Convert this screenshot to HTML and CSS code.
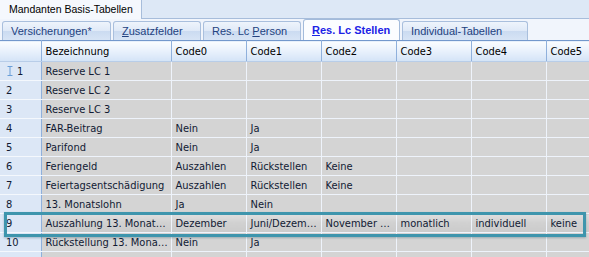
FILE: index.html
```html
<!DOCTYPE html>
<html>
<head>
<meta charset="utf-8">
<link rel="stylesheet" href="styles.css">
</head>
<body>
<div class="top-strip">
  <div class="main-tab">Mandanten Basis-Tabellen</div>
  <div class="top-fill"></div>
</div>
<div class="tab-row">
  <div class="tab t1">Versicherungen*</div>
  <div class="tab t2"><u>Z</u>usatzfelder</div>
  <div class="tab t3">Res. Lc <u>P</u>erson</div>
  <div class="tab t4 active"><u>R</u>es. Lc Stellen</div>
  <div class="tab t5">Individual-Tabellen</div>
</div>
<div class="grid-wrap">
  <table class="grid">
    <colgroup>
      <col class="c-rh"><col class="c-bez"><col class="c-code"><col class="c-code"><col class="c-code"><col class="c-code"><col class="c-code"><col class="c-last">
    </colgroup>
    <thead>
      <tr><th class="rh"></th><th>Bezeichnung</th><th>Code0</th><th>Code1</th><th>Code2</th><th>Code3</th><th>Code4</th><th>Code5</th></tr>
    </thead>
    <tbody>
      <tr><td class="rh"><svg class="ibeam" width="6" height="10" viewBox="0 0 6 10"><path d="M0.5 0.5h5M3 0.5v9M0.5 9.5h5" stroke="#6a9fd8" stroke-width="1" fill="none"/></svg>1</td><td>Reserve LC 1</td><td></td><td></td><td></td><td></td><td></td><td></td></tr>
      <tr><td class="rh">2</td><td>Reserve LC 2</td><td></td><td></td><td></td><td></td><td></td><td></td></tr>
      <tr><td class="rh">3</td><td>Reserve LC 3</td><td></td><td></td><td></td><td></td><td></td><td></td></tr>
      <tr><td class="rh">4</td><td>FAR-Beitrag</td><td>Nein</td><td>Ja</td><td></td><td></td><td></td><td></td></tr>
      <tr><td class="rh">5</td><td>Parifond</td><td>Nein</td><td>Ja</td><td></td><td></td><td></td><td></td></tr>
      <tr><td class="rh">6</td><td>Feriengeld</td><td>Auszahlen</td><td>Rückstellen</td><td>Keine</td><td></td><td></td><td></td></tr>
      <tr><td class="rh">7</td><td>Feiertagsentschädigung</td><td>Auszahlen</td><td>Rückstellen</td><td>Keine</td><td></td><td></td><td></td></tr>
      <tr><td class="rh">8</td><td>13. Monatslohn</td><td>Ja</td><td>Nein</td><td></td><td></td><td></td><td></td></tr>
      <tr class="sel"><td class="rh">9</td><td>Auszahlung 13. Monat…</td><td>Dezember</td><td>Juni/Dezem…</td><td>November …</td><td>monatlich</td><td>individuell</td><td>keine</td></tr>
      <tr><td class="rh">10</td><td>Rückstellung 13. Mona…</td><td>Nein</td><td>Ja</td><td></td><td></td><td></td><td></td></tr>
      <tr><td class="rh"></td><td></td><td></td><td></td><td></td><td></td><td></td><td></td></tr>
    </tbody>
  </table>
  <div class="sel-outline"></div>
</div>
</body>
</html>
```

FILE: styles.css
```css
html, body {
  margin: 0;
  padding: 0;
  width: 589px;
  height: 257px;
  overflow: hidden;
  background: #f1f5fc;
  font-family: "DejaVu Sans Condensed", "DejaVu Sans", sans-serif;
  font-stretch: condensed;
  font-size: 11px;
  color: #111a33;
}

.top-strip {
  display: flex;
  height: 19px;
  background: #dde8f6;
}
.main-tab {
  flex: none;
  box-sizing: border-box;
  width: 142px;
  padding-left: 9px;
  background: #f5f8fd;
  border-right: 1px solid #a7bddb;
  line-height: 18px;
  color: #000;
  font-family: "Liberation Sans", Arial, sans-serif;
  font-stretch: normal;
  font-size: 10.5px;
  white-space: nowrap;
  overflow: hidden;
}
.top-fill {
  flex: 1;
  border-bottom: 1px solid #a7bddb;
}

.tab-row {
  display: flex;
  align-items: flex-end;
  height: 21px;
  padding-left: 2px;
  gap: 2px;
}
.tab {
  flex: none;
  box-sizing: border-box;
  height: 19px;
  line-height: 18px;
  padding-left: 8px;
  border: 1px solid #a9bfdd;
  border-bottom: none;
  border-radius: 3px 3px 0 0;
  background: linear-gradient(#eef4fc 0%, #dfe9f7 50%, #cbdbf1 51%, #d7e4f5 100%);
  color: #23427f;
  font-family: "Liberation Sans", Arial, sans-serif;
  font-stretch: normal;
  font-size: 11px;
  white-space: nowrap;
  overflow: hidden;
}
.tab u { text-decoration: underline; }
.t1 { width: 109px; }
.t2 { width: 88px; }
.t3 { width: 98px; }
.t4 { width: 97px; }
.t5 { width: 126px; }
.tab.active {
  height: 21px;
  line-height: 20px;
  background: #fbfdff;
  border-color: #a3bbdb;
  color: #1c22e6;
  font-weight: bold;
}

.grid-wrap {
  position: relative;
  height: 217px;
  overflow: hidden;
}
.grid {
  border-collapse: collapse;
  table-layout: fixed;
  width: 600px;
  border-top: 1px solid #7398cc;
}
.c-rh { width: 41px; }
.c-bez { width: 130px; }
.c-code { width: 75px; }
.c-last { width: 54px; }

.grid th {
  height: 20px;
  padding: 0 0 0 4px;
  text-align: left;
  font-weight: normal;
  background: linear-gradient(#fbfdff, #e4eefb 60%, #d3e3f7);
  border-right: 1px solid #8fb0dc;
  border-bottom: 1px solid #b8cde8;
  color: #000;
  white-space: nowrap;
  overflow: hidden;
}
.grid td {
  height: 18px;
  padding: 0 0 0 4px;
  background: #d4d4d4;
  border-right: 1px solid #eef3fb;
  border-bottom: 1px solid #eef3fb;
  white-space: nowrap;
  overflow: hidden;
}
.grid td.rh, .grid th.rh {
  padding-left: 6px;
  background: #dce7f6;
  border-right: 1px solid #8fb0dc;
  border-bottom: 1px solid #f4f8fd;
}
.grid th.rh {
  background: linear-gradient(#fbfdff, #e4eefb 60%, #d3e3f7);
  border-bottom: 1px solid #b8cde8;
}
.ibeam {
  vertical-align: -1px;
  margin-right: 4px;
  margin-left: 1px;
}
.grid tr.sel td {
  background: linear-gradient(#dedede, #d0d0d0 50%, #cbcbcb);
}
.grid tr.sel td.rh {
  background: #dce7f6;
}

.sel-outline {
  position: absolute;
  left: 4px;
  top: 172px;
  width: 576px;
  height: 19px;
  border: 3px solid #3e95ad;
  box-shadow: 0 1px 2px rgba(40, 90, 110, 0.35);
  pointer-events: none;
}
```
